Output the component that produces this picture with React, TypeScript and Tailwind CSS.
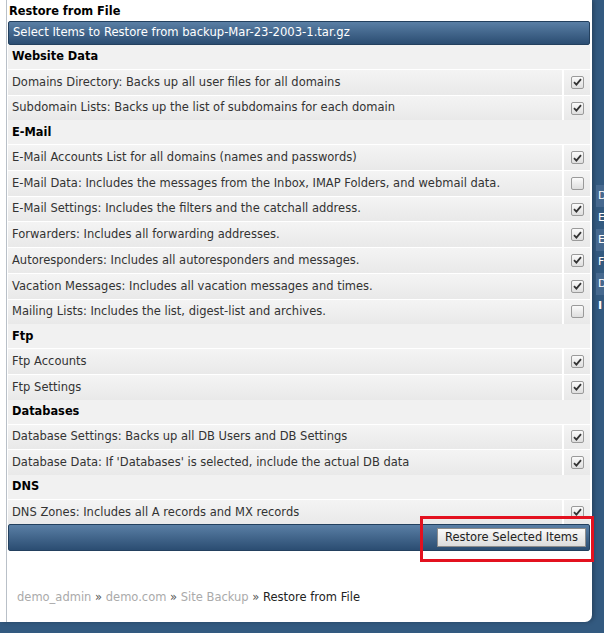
import React from "react";

type Row = { label: string; section?: boolean; checked?: boolean };

const rows: Row[] = [
  { label: "Website Data", section: true },
  { label: "Domains Directory: Backs up all user files for all domains", checked: true },
  { label: "Subdomain Lists: Backs up the list of subdomains for each domain", checked: true },
  { label: "E-Mail", section: true },
  { label: "E-Mail Accounts List for all domains (names and passwords)", checked: true },
  { label: "E-Mail Data: Includes the messages from the Inbox, IMAP Folders, and webmail data.", checked: false },
  { label: "E-Mail Settings: Includes the filters and the catchall address.", checked: true },
  { label: "Forwarders: Includes all forwarding addresses.", checked: true },
  { label: "Autoresponders: Includes all autoresponders and messages.", checked: true },
  { label: "Vacation Messages: Includes all vacation messages and times.", checked: true },
  { label: "Mailing Lists: Includes the list, digest-list and archives.", checked: false },
  { label: "Ftp", section: true },
  { label: "Ftp Accounts", checked: true },
  { label: "Ftp Settings", checked: true },
  { label: "Databases", section: true },
  { label: "Database Settings: Backs up all DB Users and DB Settings", checked: true },
  { label: "Database Data: If 'Databases' is selected, include the actual DB data", checked: true },
  { label: "DNS", section: true },
  { label: "DNS Zones: Includes all A records and MX records", checked: true },
];

function Checkbox({ checked }: { checked?: boolean }) {
  return (
    <span className="flex h-[13px] w-[13px] items-center justify-center rounded-[2px] border border-[#9a9a9a] bg-gradient-to-b from-[#fbfbfb] to-[#dedede]">
      {checked && (
        <svg width="9" height="8" viewBox="0 0 9 8">
          <path d="M1 4.2 L3.4 6.6 L8 1.2" fill="none" stroke="#333" strokeWidth="1.8" />
        </svg>
      )}
    </span>
  );
}

const sideItems = [
  { t: "D", box: true },
  { t: "E", box: false },
  { t: "E", box: true },
  { t: "F", box: false },
  { t: "D", box: true },
  { t: "I", box: false },
];

export default function App() {
  return (
    <div className="h-[633px] w-[604px] overflow-hidden bg-[#335a80] font-['DejaVu_Sans',Verdana,sans-serif] text-[11.5px] text-[#222]">
      <div className="flex">
        <div className="w-[592px] rounded-br-[7px] bg-white pl-[6px] shadow-[2px_0_4px_rgba(0,0,0,0.25)]">
          <div className="h-[622px] border-l border-[#b9c0c8] pr-[2px] pl-[1px]">
            <div className="flex h-[21px] items-end pb-[1px] pl-[1px] text-[11.4px] font-bold text-[#000]">Restore from File</div>
            <div className="flex h-[24px] items-center rounded-[2px] border border-[#23405e] bg-gradient-to-b from-[#5a7fa5] to-[#2b4d72] pl-[4px] text-[11.6px] text-white">
              Select Items to Restore from backup-Mar-23-2003-1.tar.gz
            </div>
            {rows.map((r, i) =>
              r.section ? (
                <div key={i} className="flex h-[24px] items-center bg-[#f1f1f1] pl-[4px] text-[11.4px] font-bold text-[#000]">
                  {r.label}
                </div>
              ) : (
                <div key={i} className="flex h-[25.7px] border-t border-white bg-gradient-to-b from-[#f4f4f4] to-[#e9e9e9]">
                  <div className="flex flex-1 items-center pl-[4px] text-[#333]">{r.label}</div>
                  <div className="flex w-[28px] items-center justify-center border-l-2 border-white">
                    <Checkbox checked={r.checked} />
                  </div>
                </div>
              )
            )}
            <div className="relative mt-[-1px] flex h-[27px] items-center justify-end rounded-[2px] border border-[#23405e] bg-gradient-to-b from-[#5a7fa5] to-[#2b4d72] pr-[3px]">
              <button className="h-[19px] border border-[#8c8c8c] bg-gradient-to-b from-[#fafafa] to-[#dcdcdc] px-[7px] text-[11.5px] text-[#222]">
                Restore Selected Items
              </button>
              <div className="pointer-events-none absolute top-[-9px] right-[-5px] h-[46px] w-[174px] border-[3px] border-[#e3111f]" />
            </div>
            <div className="mt-[38px] pl-[9px] text-[11.5px] text-[#aaa]">
              demo_admin <span className="text-[#555]">»</span> demo.com <span className="text-[#555]">»</span> Site Backup{" "}
              <span className="text-[#555]">»</span> <span className="text-[#222]">Restore from File</span>
            </div>
          </div>
        </div>
        <div className="flex-1 overflow-hidden pt-[185px] pl-[4px]">
          {sideItems.map((s, i) => (
            <div
              key={i}
              className={`flex h-[22px] w-[40px] items-center pl-[2px] text-[11px] ${s.box ? "bg-[#46698f] text-white" : "text-white"} ${i === 5 ? "font-bold text-[#a8e0ff]" : ""}`}
            >
              {s.t}
            </div>
          ))}
        </div>
      </div>
    </div>
  );
}
